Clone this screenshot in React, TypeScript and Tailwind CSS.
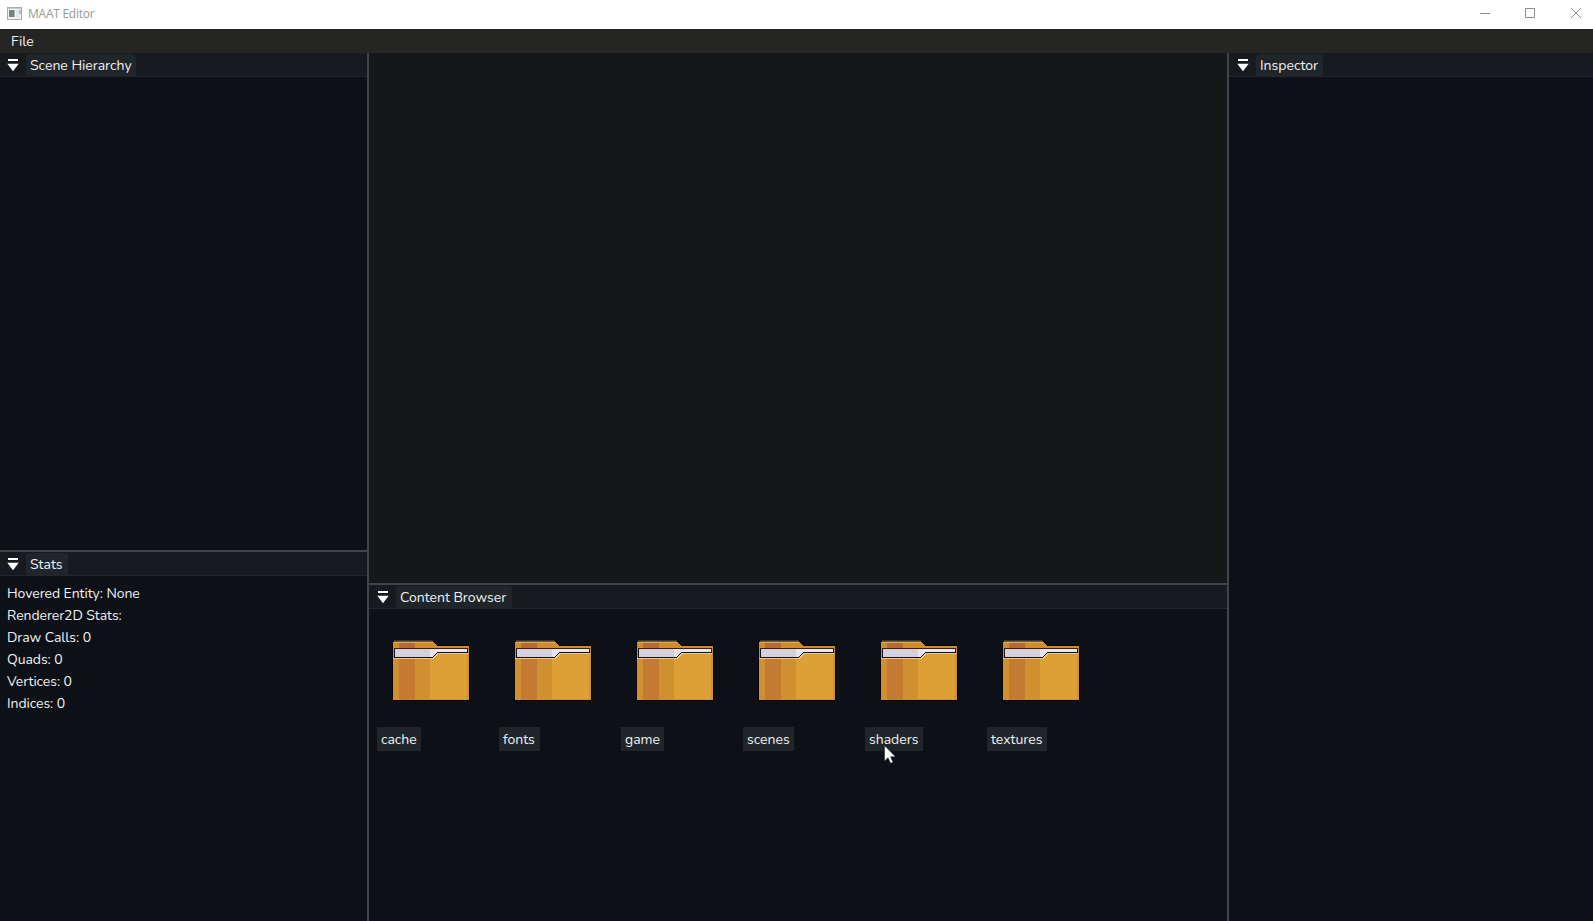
import React from "react";

const FONT = "font-['Nunito','Lato','Liberation_Sans',sans-serif]";

function MenuTriangle() {
  return (
    <svg width="12" height="13" viewBox="0 0 12 13" className="shrink-0">
      <rect x="1" y="0" width="10" height="2" fill="#fff" />
      <path d="M0.3 4.8H11.7L6 12.2Z" fill="#fff" />
    </svg>
  );
}

function TabBar({ title, width, inset }: { title: string; width: string; inset: string }) {
  return (
    <div className={`flex h-6 shrink-0 items-end border-b border-[#23272c] bg-[#171a1f] ${inset}`}>
      <div className="flex h-[17px] w-[19px] items-start">
        <MenuTriangle />
      </div>
      <div
        className={`h-[22px] whitespace-nowrap rounded-t bg-[#20252a] pl-1 pt-px leading-[22px] ${width}`}
      >
        {title}
      </div>
    </div>
  );
}

function FolderIcon() {
  return (
    <svg width="79" height="62" viewBox="0 0 79 62" shapeRendering="crispEdges" className="ml-[15px]">
      <path d="M0 1H1V0H42L46 5H77V6H78V61H0Z" fill="#060607" />
      <path d="M1 2H41L45 6H76L77 7V60H1Z" fill="#d08a30" />
      <rect x="7" y="2" width="16" height="7" fill="#b86a36" />
      <path d="M2 0H41V1H2Z" fill="#3a352c" />
      <path d="M2 1H41V2H2Z" fill="#6b5a3c" />
      <path d="M1 2H41V3H1Z" fill="#e0a850" />
      <rect x="2" y="8" width="74" height="1" fill="#3a2018" />
      <path d="M2 9H76V13H46L42 18H2Z" fill="#151114" />
      <path d="M3 9H75V12H45L41 17H3Z" fill="#d4d0de" />
      <path d="M38 9H75V12H45L41 17H38Z" fill="#e6e4ee" />
      <path d="M1 18H41L45 13H77V60H1Z" fill="#d08f31" />
      <rect x="7" y="19" width="16" height="41" fill="#c47a31" />
      <path d="M38 18H41L45 13H75V59H38Z" fill="#dca036" />
      <path d="M1 18H41L45 13H76V14H46L42 19H1Z" fill="#ecc98c" />
    </svg>
  );
}

const folders = [
  { name: "cache", width: "w-11" },
  { name: "fonts", width: "w-[41px]" },
  { name: "game", width: "w-[43px]" },
  { name: "scenes", width: "w-[51px]" },
  { name: "shaders", width: "w-[58px]" },
  { name: "textures", width: "w-[60px]" },
];

const stats = [
  "Hovered Entity: None",
  "Renderer2D Stats:",
  "Draw Calls: 0",
  "Quads: 0",
  "Vertices: 0",
  "Indices: 0",
];

function TitleBar() {
  return (
    <header className="flex h-[29px] shrink-0 items-center justify-between bg-white pb-[2px] pl-[7px] pr-[11px]">
      <div className="flex items-center">
        <svg width="15" height="13" viewBox="0 0 15 13" shapeRendering="crispEdges" className="-mt-px">
          <rect x="0.5" y="0.5" width="14" height="12" fill="#f2f2f2" stroke="#a9a9a9" />
          <rect x="1" y="1" width="13" height="1" fill="#c9c9c9" />
          <rect x="2" y="3" width="5" height="7" fill="#78827f" />
          <rect x="7" y="3" width="1" height="7" fill="#adb4b4" />
          <rect x="9" y="3" width="3" height="8" fill="#e4e8ec" />
          <rect x="12" y="3" width="2" height="4" fill="#b8bcc0" />
        </svg>
        <span className="ml-[6px] mt-px whitespace-nowrap font-['Open_Sans',sans-serif] text-[12px] leading-4 tracking-[-0.25px] text-[#999]">
          MAAT Editor
        </span>
      </div>
      <svg width="102" height="11" viewBox="0 0 102 11" fill="none" stroke="#8c8c8c">
        <path d="M0 5.5H10" />
        <path d="M45.5 0.5H54.5V9.5H45.5Z" />
        <path d="M91 0L101 10M101 0L91 10" />
      </svg>
    </header>
  );
}

export default function App() {
  return (
    <div className={`relative flex h-[921px] w-[1593px] flex-col overflow-hidden bg-[#0d1017] text-[14px] text-[#f0f1f2] ${FONT}`}>
      <TitleBar />
      <nav className="flex h-6 shrink-0 items-center bg-[#252523] pl-[11px] pt-px">File</nav>
      <main className="flex min-h-0 flex-1">
        <aside className="flex w-[367px] flex-col">
          <section className="flex h-[497px] flex-col">
            <TabBar title="Scene Hierarchy" width="w-[110px]" inset="pl-[7px]" />
          </section>
          <div className="h-[2px] shrink-0 bg-[#42444c]" />
          <section className="flex flex-1 flex-col">
            <TabBar title="Stats" width="w-[42px]" inset="pl-[7px]" />
            <div className="flex flex-col pl-[7px] pt-[7px] tracking-[-0.06px]">
              {stats.map((s) => (
                <div key={s} className="h-[22px] whitespace-nowrap leading-[22px]">
                  {s}
                </div>
              ))}
            </div>
          </section>
        </aside>
        <div className="w-[2px] shrink-0 bg-[#42444c]" />
        <div className="flex w-[858px] flex-col">
          <section className="h-[530px] shrink-0 bg-[#141819]" />
          <div className="h-[2px] shrink-0 bg-[#42444c]" />
          <section className="flex flex-1 flex-col">
            <TabBar title="Content Browser" width="w-[116px]" inset="pl-2" />
            <div className="flex pl-2 pt-[31px]">
              {folders.map((f) => (
                <div key={f.name} className="flex w-[122px] flex-col">
                  <FolderIcon />
                  <div
                    className={`mt-[25px] h-6 whitespace-nowrap bg-[#20252a] pl-1 pt-px leading-6 ${f.width}`}
                  >
                    {f.name}
                  </div>
                </div>
              ))}
            </div>
          </section>
        </div>
        <div className="w-[2px] shrink-0 bg-[#42444c]" />
        <aside className="flex flex-1 flex-col">
          <TabBar title="Inspector" width="w-[67px]" inset="pl-2" />
        </aside>
      </main>
      <svg className="absolute left-[884px] top-[745px]" width="12" height="19" viewBox="0 0 12 19">
        <path d="M0.5 0.5V16L4 12.8L6.5 18.3L9 17.2L6.6 11.8H11.5Z" fill="#fff" stroke="#111" strokeWidth="0.5" />
      </svg>
    </div>
  );
}
